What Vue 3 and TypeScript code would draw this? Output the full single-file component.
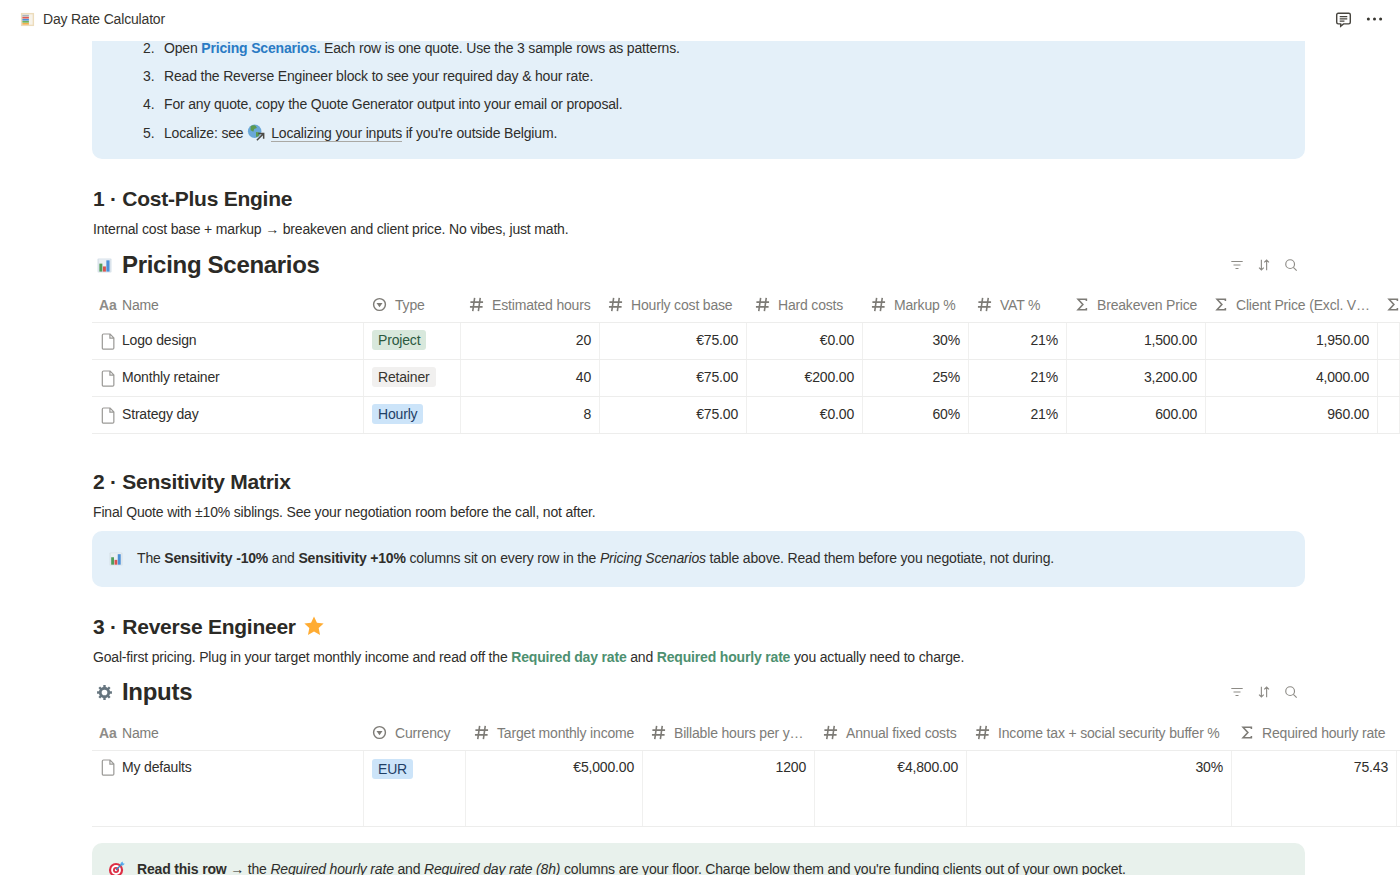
<script setup lang="ts">
const pricingHead: [string, string][] = [
  ['select', 'Type'], ['hash', 'Estimated hours'], ['hash', 'Hourly cost base'], ['hash', 'Hard costs'],
  ['hash', 'Markup %'], ['hash', 'VAT %'], ['sum', 'Breakeven Price'], ['sum', 'Client Price (Excl. V…'], ['sum', ''],
]
const pricingRows: { name: string; tag: string; tone: string; vals: string[] }[] = [
  { name: 'Logo design', tag: 'Project', tone: 'green', vals: ['20', '€75.00', '€0.00', '30%', '21%', '1,500.00', '1,950.00', ''] },
  { name: 'Monthly retainer', tag: 'Retainer', tone: 'grey', vals: ['40', '€75.00', '€200.00', '25%', '21%', '3,200.00', '4,000.00', ''] },
  { name: 'Strategy day', tag: 'Hourly', tone: 'blue', vals: ['8', '€75.00', '€0.00', '60%', '21%', '600.00', '960.00', ''] },
]
const inputHead: [string, string][] = [
  ['select', 'Currency'], ['hash', 'Target monthly income'], ['hash', 'Billable hours per y…'], ['hash', 'Annual fixed costs'],
  ['hash', 'Income tax + social security buffer %'], ['sum', 'Required hourly rate'],
]
const inputRows = [
  { name: 'My defaults', tag: 'EUR', tone: 'blue', vals: ['€5,000.00', '1200', '€4,800.00', '30%', '75.43'] },
]
const pricing = { head: pricingHead, rows: pricingRows }
const inputs = { head: inputHead, rows: inputRows }
</script>

<template>
  <div class="page">
    <header class="topbar">
      <div class="crumb">
        <svg class="abacus" viewBox="0 0 16 16">
          <rect x="1" y="1" width="14" height="14" fill="#ecdcbc" />
          <rect x="2.500" y="2.500" width="11" height="11" fill="#f7f3ea" />
          <rect x="2.500" y="3" width="7" height="1.800" fill="#a9b4bd" />
          <rect x="2.500" y="5.200" width="7" height="1.800" fill="#dd5a55" />
          <rect x="2.500" y="7.400" width="7" height="1.800" fill="#4a8fd8" />
          <rect x="2.500" y="9.600" width="7" height="1.800" fill="#6fb35e" />
          <rect x="2.500" y="11.700" width="7" height="1.800" fill="#f4b04f" />
        </svg>
        <span>Day Rate Calculator</span>
      </div>
      <div class="actions">
        <svg class="comment" viewBox="0 0 18 18" fill="none" stroke="#47453f" stroke-width="1.500">
          <path d="M3.400 2.400h11.200a1.600 1.600 0 0 1 1.600 1.600v8a1.600 1.600 0 0 1-1.600 1.600H9l-3 2.600v-2.600H3.400a1.600 1.600 0 0 1-1.600-1.600V4a1.600 1.600 0 0 1 1.600-1.600z" />
          <path d="M5 6h8M5 8.400h8M5 10.800h5" stroke-width="1.300" />
        </svg>
        <svg class="more" viewBox="0 0 18 4" fill="#37352f">
          <circle cx="2.500" cy="2" r="1.600" /><circle cx="9" cy="2" r="1.600" /><circle cx="15.500" cy="2" r="1.600" />
        </svg>
      </div>
    </header>

    <main class="content">
      <section class="callout steps">
        <ol>
          <li>Open <b class="blue-link">Pricing Scenarios.</b> Each row is one quote. Use the 3 sample rows as patterns.</li>
          <li>Read the Reverse Engineer block to see your required day &amp; hour rate.</li>
          <li>For any quote, copy the Quote Generator output into your email or proposal.</li>
          <li class="last-step">Localize: see
            <svg class="globe" viewBox="0 0 20 20">
              <circle cx="8.500" cy="8" r="7.500" fill="#6aa8d8" />
              <path d="M4 2.500c2-1.500 5-1.500 6 0l1 2-3 1-1 3-3-1.500zM10 9l4 .5-1 4-3 1z" fill="#5c9a4e" />
              <path d="M11 18 18 11M12.500 10.500h6v6" fill="none" stroke="#4b4a46" stroke-width="1.700" />
            </svg>
            <span class="page-link">Localizing your inputs</span> if you're outside Belgium.
          </li>
        </ol>
      </section>

      <h2 class="h-one">1 · Cost-Plus Engine</h2>
      <p class="para">Internal cost base + markup → breakeven and client price. No vibes, just math.</p>

      <div class="db-title">
        <svg class="db-icon" viewBox="0 0 16 16">
          <rect x="0.500" y="0.500" width="15" height="15" rx="1" fill="#d8e2ea" />
          <rect x="2" y="1.500" width="12" height="13" fill="#e9eff3" />
          <rect x="2.500" y="6" width="3.200" height="8.500" fill="#4f9d5b" />
          <rect x="6.300" y="9" width="3.200" height="5.500" fill="#d9534f" />
          <rect x="10" y="2.500" width="3.400" height="12" fill="#4a8fd8" />
        </svg>
        <h3>Pricing Scenarios</h3>
        <div class="tools">
          <svg viewBox="0 0 16 16" fill="none" stroke="#8d8b86" stroke-width="1.300"><path d="M1.500 4h13M4 8h8M6.300 12h3.400" /></svg>
          <svg viewBox="0 0 16 16" fill="none" stroke="#8d8b86" stroke-width="1.300"><path d="M5 2v11.500M2.300 11 5 13.700 7.700 11M11 14V2.500M8.300 5 11 2.300 13.700 5" /></svg>
          <svg viewBox="0 0 16 16" fill="none" stroke="#8d8b86" stroke-width="1.300"><circle cx="7" cy="7" r="5" /><path d="m10.700 10.700 3.800 3.800" /></svg>
        </div>
      </div>

      <div class="table-wrap">
        <div class="row head pricing">
          <div class="cell name-head">
            <span class="aa">Aa</span><span class="label">Name</span>
          </div>
          <div v-for="(h, i) in pricing.head" :key="i" class="cell">
            <svg v-if="h[0] === 'select'" class="col-ic" viewBox="0 0 16 16" fill="none" stroke="#7d7b76" stroke-width="1.500"><circle cx="8" cy="8" r="6.300" /><path d="M4.800 6.500h6.400L8 10.800z" fill="#7d7b76" stroke="none" /></svg>
            <svg v-else-if="h[0] === 'hash'" class="col-ic hash" viewBox="0 0 16 16" fill="none" stroke="#7d7b76" stroke-width="1.700"><path d="M6 1 4 15M12 1l-2 14M1.500 5.500h13.500M1 10.500h13.500" /></svg>
            <svg v-else class="col-ic sigma" viewBox="0 0 16 16" fill="none" stroke="#7d7b76" stroke-width="1.800"><path d="M13 4V2H3.500L9 8l-5.500 6H13v-2" /></svg>
            <span class="label">{{ h[1] }}</span>
          </div>
        </div>
        <div v-for="r in pricing.rows" :key="r.name" class="row body pricing">
          <div class="cell name">
            <svg class="doc" viewBox="0 0 16 18" fill="none" stroke="#9b9a97" stroke-width="1.300"><path d="M2.700 1h7l4 4.200v10.600a1.300 1.300 0 0 1-1.300 1.300H2.700a1.300 1.300 0 0 1-1.300-1.300V2.300A1.300 1.300 0 0 1 2.700 1zM9.500 1v4.400h4.200" /></svg>
            <span>{{ r.name }}</span>
          </div>
          <div class="cell tagcell"><span class="tag" :class="r.tone">{{ r.tag }}</span></div>
          <div v-for="(v, i) in r.vals" :key="i" class="cell num">{{ v }}</div>
        </div>
      </div>

      <h2 class="h-two">2 · Sensitivity Matrix</h2>
      <p class="para">Final Quote with ±10% siblings. See your negotiation room before the call, not after.</p>

      <section class="callout note">
        <svg class="note-ic" viewBox="0 0 16 16">
          <rect x="0.500" y="0.500" width="15" height="15" rx="1" fill="#d8e2ea" />
          <rect x="2" y="1.500" width="12" height="13" fill="#e9eff3" />
          <rect x="2.500" y="6" width="3.200" height="8.500" fill="#4f9d5b" />
          <rect x="6.300" y="9" width="3.200" height="5.500" fill="#d9534f" />
          <rect x="10" y="2.500" width="3.400" height="12" fill="#4a8fd8" />
        </svg>
        <span>The <b>Sensitivity -10%</b> and <b>Sensitivity +10%</b> columns sit on every row in the <i>Pricing Scenarios</i> table above. Read them before you negotiate, not during.</span>
      </section>

      <h2 class="h-three">3 · Reverse Engineer
        <svg class="star" viewBox="0 0 24 24"><path d="M12 1.500 15.200 8.500l7.300.8-5.400 5 1.500 7.400L12 18l-6.600 3.700 1.500-7.400-5.400-5 7.300-.8z" fill="#ffac33" /></svg>
      </h2>
      <p class="para">Goal-first pricing. Plug in your target monthly income and read off the <b class="green-link">Required day rate</b> and <b class="green-link">Required hourly rate</b> you actually need to charge.</p>

      <div class="db-title inputs-title">
        <svg class="db-icon gear" viewBox="0 0 24 24" fill="none">
          <circle cx="12" cy="12" r="6" stroke="#66757f" stroke-width="4" />
          <path d="M12 1.500v5M12 17.500v5M1.500 12h5M17.500 12h5M4.600 4.600l3.500 3.500M15.900 15.900l3.500 3.500M4.600 19.400l3.500-3.500M15.900 8.100l3.500-3.500" stroke="#66757f" stroke-width="3.400" />
        </svg>
        <h3>Inputs</h3>
        <div class="tools">
          <svg viewBox="0 0 16 16" fill="none" stroke="#8d8b86" stroke-width="1.300"><path d="M1.500 4h13M4 8h8M6.300 12h3.400" /></svg>
          <svg viewBox="0 0 16 16" fill="none" stroke="#8d8b86" stroke-width="1.300"><path d="M5 2v11.500M2.300 11 5 13.700 7.700 11M11 14V2.500M8.300 5 11 2.300 13.700 5" /></svg>
          <svg viewBox="0 0 16 16" fill="none" stroke="#8d8b86" stroke-width="1.300"><circle cx="7" cy="7" r="5" /><path d="m10.700 10.700 3.800 3.800" /></svg>
        </div>
      </div>

      <div class="table-wrap inputs-wrap">
        <div class="row head inputs">
          <div class="cell name-head">
            <span class="aa">Aa</span><span class="label">Name</span>
          </div>
          <div v-for="(h, i) in inputs.head" :key="i" class="cell">
            <svg v-if="h[0] === 'select'" class="col-ic" viewBox="0 0 16 16" fill="none" stroke="#7d7b76" stroke-width="1.500"><circle cx="8" cy="8" r="6.300" /><path d="M4.800 6.500h6.400L8 10.800z" fill="#7d7b76" stroke="none" /></svg>
            <svg v-else-if="h[0] === 'hash'" class="col-ic hash" viewBox="0 0 16 16" fill="none" stroke="#7d7b76" stroke-width="1.700"><path d="M6 1 4 15M12 1l-2 14M1.500 5.500h13.500M1 10.500h13.500" /></svg>
            <svg v-else class="col-ic sigma" viewBox="0 0 16 16" fill="none" stroke="#7d7b76" stroke-width="1.800"><path d="M13 4V2H3.500L9 8l-5.500 6H13v-2" /></svg>
            <span class="label">{{ h[1] }}</span>
          </div>
        </div>
        <div v-for="r in inputs.rows" :key="r.name" class="row body tall inputs">
          <div class="cell name">
            <svg class="doc" viewBox="0 0 16 18" fill="none" stroke="#9b9a97" stroke-width="1.300"><path d="M2.700 1h7l4 4.200v10.600a1.300 1.300 0 0 1-1.300 1.300H2.700a1.300 1.300 0 0 1-1.300-1.300V2.300A1.300 1.300 0 0 1 2.700 1zM9.500 1v4.400h4.200" /></svg>
            <span>{{ r.name }}</span>
          </div>
          <div class="cell tagcell"><span class="tag" :class="r.tone">{{ r.tag }}</span></div>
          <div v-for="(v, i) in r.vals" :key="i" class="cell num">{{ v }}</div>
        </div>
      </div>

      <section class="callout note green-note">
        <svg class="note-ic" viewBox="0 0 18 18">
          <circle cx="8.500" cy="9.500" r="7.500" fill="#dd2e44" />
          <circle cx="8.500" cy="9.500" r="5.200" fill="#fff" />
          <circle cx="8.500" cy="9.500" r="3.200" fill="#dd2e44" />
          <circle cx="8.500" cy="9.500" r="1.300" fill="#fff" />
          <path d="M8.500 9.500 15 3" stroke="#3b88c3" stroke-width="1.400" />
          <path d="M13 2.500 15.500 0.500 15.800 2.500 17.800 2.800 15.500 5z" fill="#55acee" />
        </svg>
        <span><b>Read this row</b> → the <i>Required hourly rate</i> and <i>Required day rate (8h)</i> columns are your floor. Charge below them and you're funding clients out of your own pocket.</span>
      </section>
    </main>
  </div>
</template>

<style scoped>
.page {
  width: 1400px;
  height: 875px;
  overflow: hidden;
  background: #fff;
  color: #2f2e2b;
  font-family: "Liberation Sans", Arial, sans-serif;
  font-size: 14px;
  letter-spacing: -0.175px;
  line-height: 20px;
}
.topbar {
  height: 41px;
  box-sizing: border-box;
  padding: 0 17px 3px 20px;
  display: flex;
  align-items: center;
  justify-content: space-between;
}
.crumb { display: flex; align-items: center; gap: 8px; color: #37352f; }
.abacus { width: 15px; height: 15px; }
.actions { display: flex; align-items: center; gap: 14px; }
.comment { width: 17px; height: 17px; }
.more { width: 17px; height: 4px; }
.content { padding: 0 0 0 92px; }
.callout {
  width: 1213px;
  box-sizing: border-box;
  background: #e4f0f9;
  border-radius: 10px;
}
.steps {
  border-radius: 0 0 10px 10px;
  height: 118px;
}
.steps ol {
  margin: 0;
  padding: 0 0 0 51px;
  list-style: none;
  counter-reset: step 1;
}
.steps li {
  height: 28px;
  line-height: 14px;
  counter-increment: step;
  white-space: nowrap;
}
.steps li::before {
  content: counter(step) ".";
  display: inline-block;
  width: 21px;
}
.steps .last-step { padding-top: 1px; box-sizing: border-box; }
.blue-link { color: #2a7bc4; font-weight: 700; }
.green-link { color: #4d9070; font-weight: 700; }
.globe { width: 18px; height: 18px; vertical-align: middle; margin: -4px 6px -2px 0; }
.page-link { border-bottom: 1px solid #aaa9a5; }
.h-one, .h-two, .h-three {
  margin: 0;
  padding-left: 1px;
  font-size: 21px;
  letter-spacing: -0.25px;
  line-height: 28px;
  font-weight: 700;
  color: #2b2a26;
}
.h-one { margin-top: 26px; }
.h-two { margin-top: 34px; }
.h-three { margin-top: 26px; display: flex; align-items: center; gap: 7px; }
.star { width: 22px; height: 22px; margin-top: -3px; }
.para { margin: 6px 0 0; padding-left: 1px; height: 20px; }
.db-title {
  display: flex;
  align-items: center;
  height: 36px;
  margin-top: 8px;
  width: 1213px;
}
.inputs-title { margin-top: 9px; height: 32px; }
.db-title h3 { margin: 0; font-size: 24px; letter-spacing: -0.3px; line-height: 32px; font-weight: 700; color: #2b2a26; }
.db-icon { width: 15px; height: 15px; margin: 0 10px 0 5px; }
.db-icon.gear { width: 17px; height: 17px; margin: 0 9px 0 4px; }
.tools { margin-left: auto; display: flex; gap: 13px; padding-right: 7px; }
.tools svg { width: 14px; height: 14px; }
.table-wrap { width: 1308px; overflow: hidden; margin-top: 4px; }
.inputs-wrap { margin-top: 7px; }
.row { display: grid; }
.pricing { grid-template-columns: 271px 97px 139px 147px 116px 106px 98px 139px 172px 23px; }
.inputs { grid-template-columns: 271px 102px 177px 172px 152px 265px 166px 3px; }
.head { height: 35px; border-bottom: 1px solid #ededec; }
.body { height: 36px; border-bottom: 1px solid #ededec; }
.body.tall { height: 75px; }
.cell {
  min-width: 0;
  box-sizing: border-box;
  display: flex;
  align-items: center;
  white-space: nowrap;
  overflow: hidden;
}
.head .cell { padding-left: 9px; color: #7d7b76; }
.head .name-head { padding-left: 7px; }
.aa { width: 23px; font-size: 14px; font-weight: 700; color: #8e8c88; flex: none; }
.label { color: #7d7c78; }
.col-ic { width: 15px; height: 15px; margin-right: 8px; flex: none; }
.col-ic.sigma { width: 14px; margin-right: 8px; }
.body .cell { border-left: 1px solid #f0f0ef; padding-bottom: 2px; }
.body .cell:last-child { border-right: 1px solid #f0f0ef; }
.body .name { border-left: 0; padding-left: 9px; gap: 6px; }
.doc { width: 15px; height: 17px; flex: none; margin-top: 2px; }
.tagcell { padding-left: 8px; }
.tag {
  height: 20px;
  line-height: 20px;
  padding: 0 6px;
  border-radius: 3px;
}
.tag.green { background: #d8e8dc; color: #2b593f; }
.tag.grey { background: #f1f0ef; color: #37352f; }
.tag.blue { background: #cce4f9; color: #1f3f66; }
.num { justify-content: flex-end; padding-right: 8px; }
.tall .cell { align-items: flex-start; padding-top: 6px; }
.tall .tagcell { padding-top: 8px; }
.note {
  height: 56px;
  margin-top: 9px;
  display: flex;
  align-items: center;
  padding-left: 17px;
  padding-bottom: 2px;
  gap: 14px;
}
.note-ic { width: 14px; height: 14px; flex: none; margin-top: 2px; }
.green-note {
  margin-top: 16px;
  background: #e8f1ec;
  align-items: flex-start;
  padding-top: 16px;
  height: 60px;
}
.green-note .note-ic { width: 17px; height: 17px; margin: 2px -2px 0 -1px; }
</style>

<style>
html, body { margin: 0; padding: 0; background: #fff; }
</style>
